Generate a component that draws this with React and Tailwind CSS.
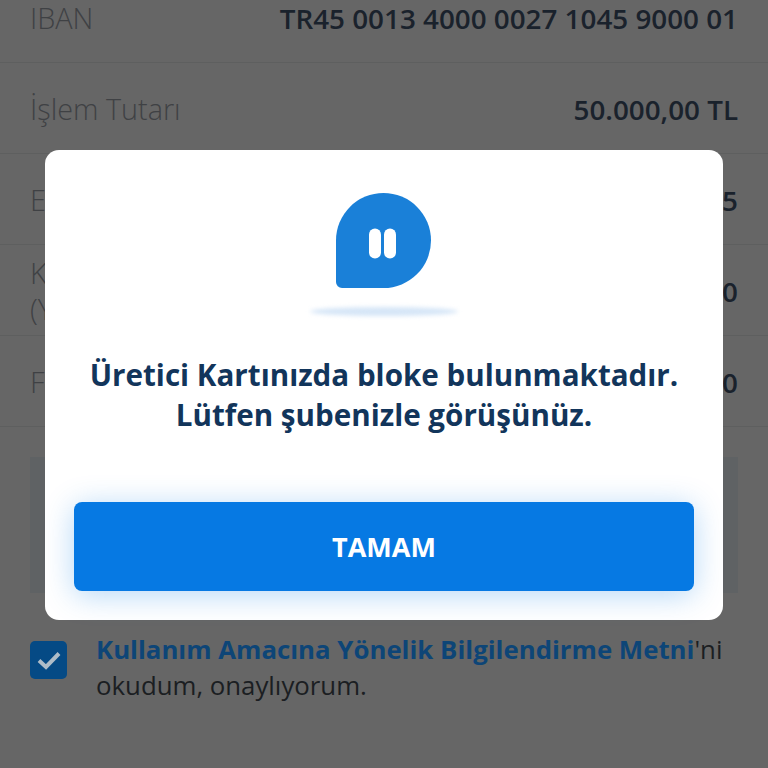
const rows = [
  { label: 'IBAN', value: 'TR45 0013 4000 0027 1045 9000 01' },
  { label: 'İşlem Tutarı', value: '50.000,00 TL' },
  { label: 'EFT Ücreti', value: '2,75' },
  { label: 'Kullanım Tutarı', sub: '(YTL)', value: '0,00' },
  { label: 'Faiz Tutarı', value: '0,00' },
];

function BubbleIcon() {
  return (
    <svg width="96" height="96" viewBox="0 0 96 96" className="block">
      <path
        d="M0 47.5a47.5 47.5 0 1 1 47.5 47.5H6a6 6 0 0 1-6-6z"
        fill="#1a80d8"
      />
      <rect x="33" y="35.5" width="12" height="30" rx="6" fill="#fff" />
      <rect x="48" y="35.5" width="12" height="30" rx="6" fill="#fff" />
    </svg>
  );
}

export default function App() {
  return (
    <div className="relative h-[768px] w-[768px] overflow-hidden bg-[#666666] font-['Open_Sans',sans-serif]">
      {/* Dimmed page behind the dialog */}
      <div className="-mt-[28px]">
        {rows.map((row) => (
          <div
            key={row.label}
            className="flex h-[91px] items-center justify-between border-b border-[#5e5f5f] px-[30px] pt-[1px] leading-[36px]"
          >
            <span className="whitespace-nowrap text-[28.8px] font-light text-[#3f4144]">
              {row.label}
              {row.sub && <br />}
              {row.sub}
            </span>
            <span className="whitespace-nowrap text-[27.8px] font-semibold text-[#1a222c]">{row.value}</span>
          </div>
        ))}
        <div className="mx-[30px] mt-[30px] h-[136px] bg-[#5f6264]" />
        <div className="mt-[38px] flex gap-[30px] pl-[30px] pr-[20px]">
          <div className="mt-[10px] flex h-[38px] w-[37px] shrink-0 items-center justify-center rounded-[5px] bg-[#054a85]">
            <svg width="26" height="20" viewBox="0 0 26 20" fill="none">
              <path d="M3 10.5l7 6.5L23 3.5" stroke="#aebcc8" strokeWidth="4" />
            </svg>
          </div>
          <p className="-ml-px text-[25.8px] leading-[36px] text-[#1b1e22]">
            <span className="font-bold text-[#0d4577]">Kullanım Amacına Yönelik Bilgilendirme Metni</span>
            'ni okudum, onaylıyorum.
          </p>
        </div>
      </div>

      {/* Dialog */}
      <div className="absolute left-[45px] top-[150px] flex h-[470px] w-[678px] flex-col items-center rounded-[14px] bg-white px-[29px] pt-[43px]">
        <BubbleIcon />
        <div className="mt-[18px] h-[9px] w-[148px] rounded-[50%] bg-[#d6e6f7] blur-[2px]" />
        <p className="mt-[39px] whitespace-nowrap text-center text-[29.6px] font-bold leading-[40px] text-[#12355b]">
          Üretici Kartınızda bloke bulunmaktadır.
          <br />
          Lütfen şubenizle görüşünüz.
        </p>
        <button className="mt-[67px] h-[89px] w-[620px] shrink-0 rounded-[8px] bg-[#0679e3] pt-[2px] text-[27px] font-bold text-white shadow-[0_4px_30px_rgba(6,121,227,0.3)]">
          TAMAM
        </button>
      </div>
    </div>
  );
}
